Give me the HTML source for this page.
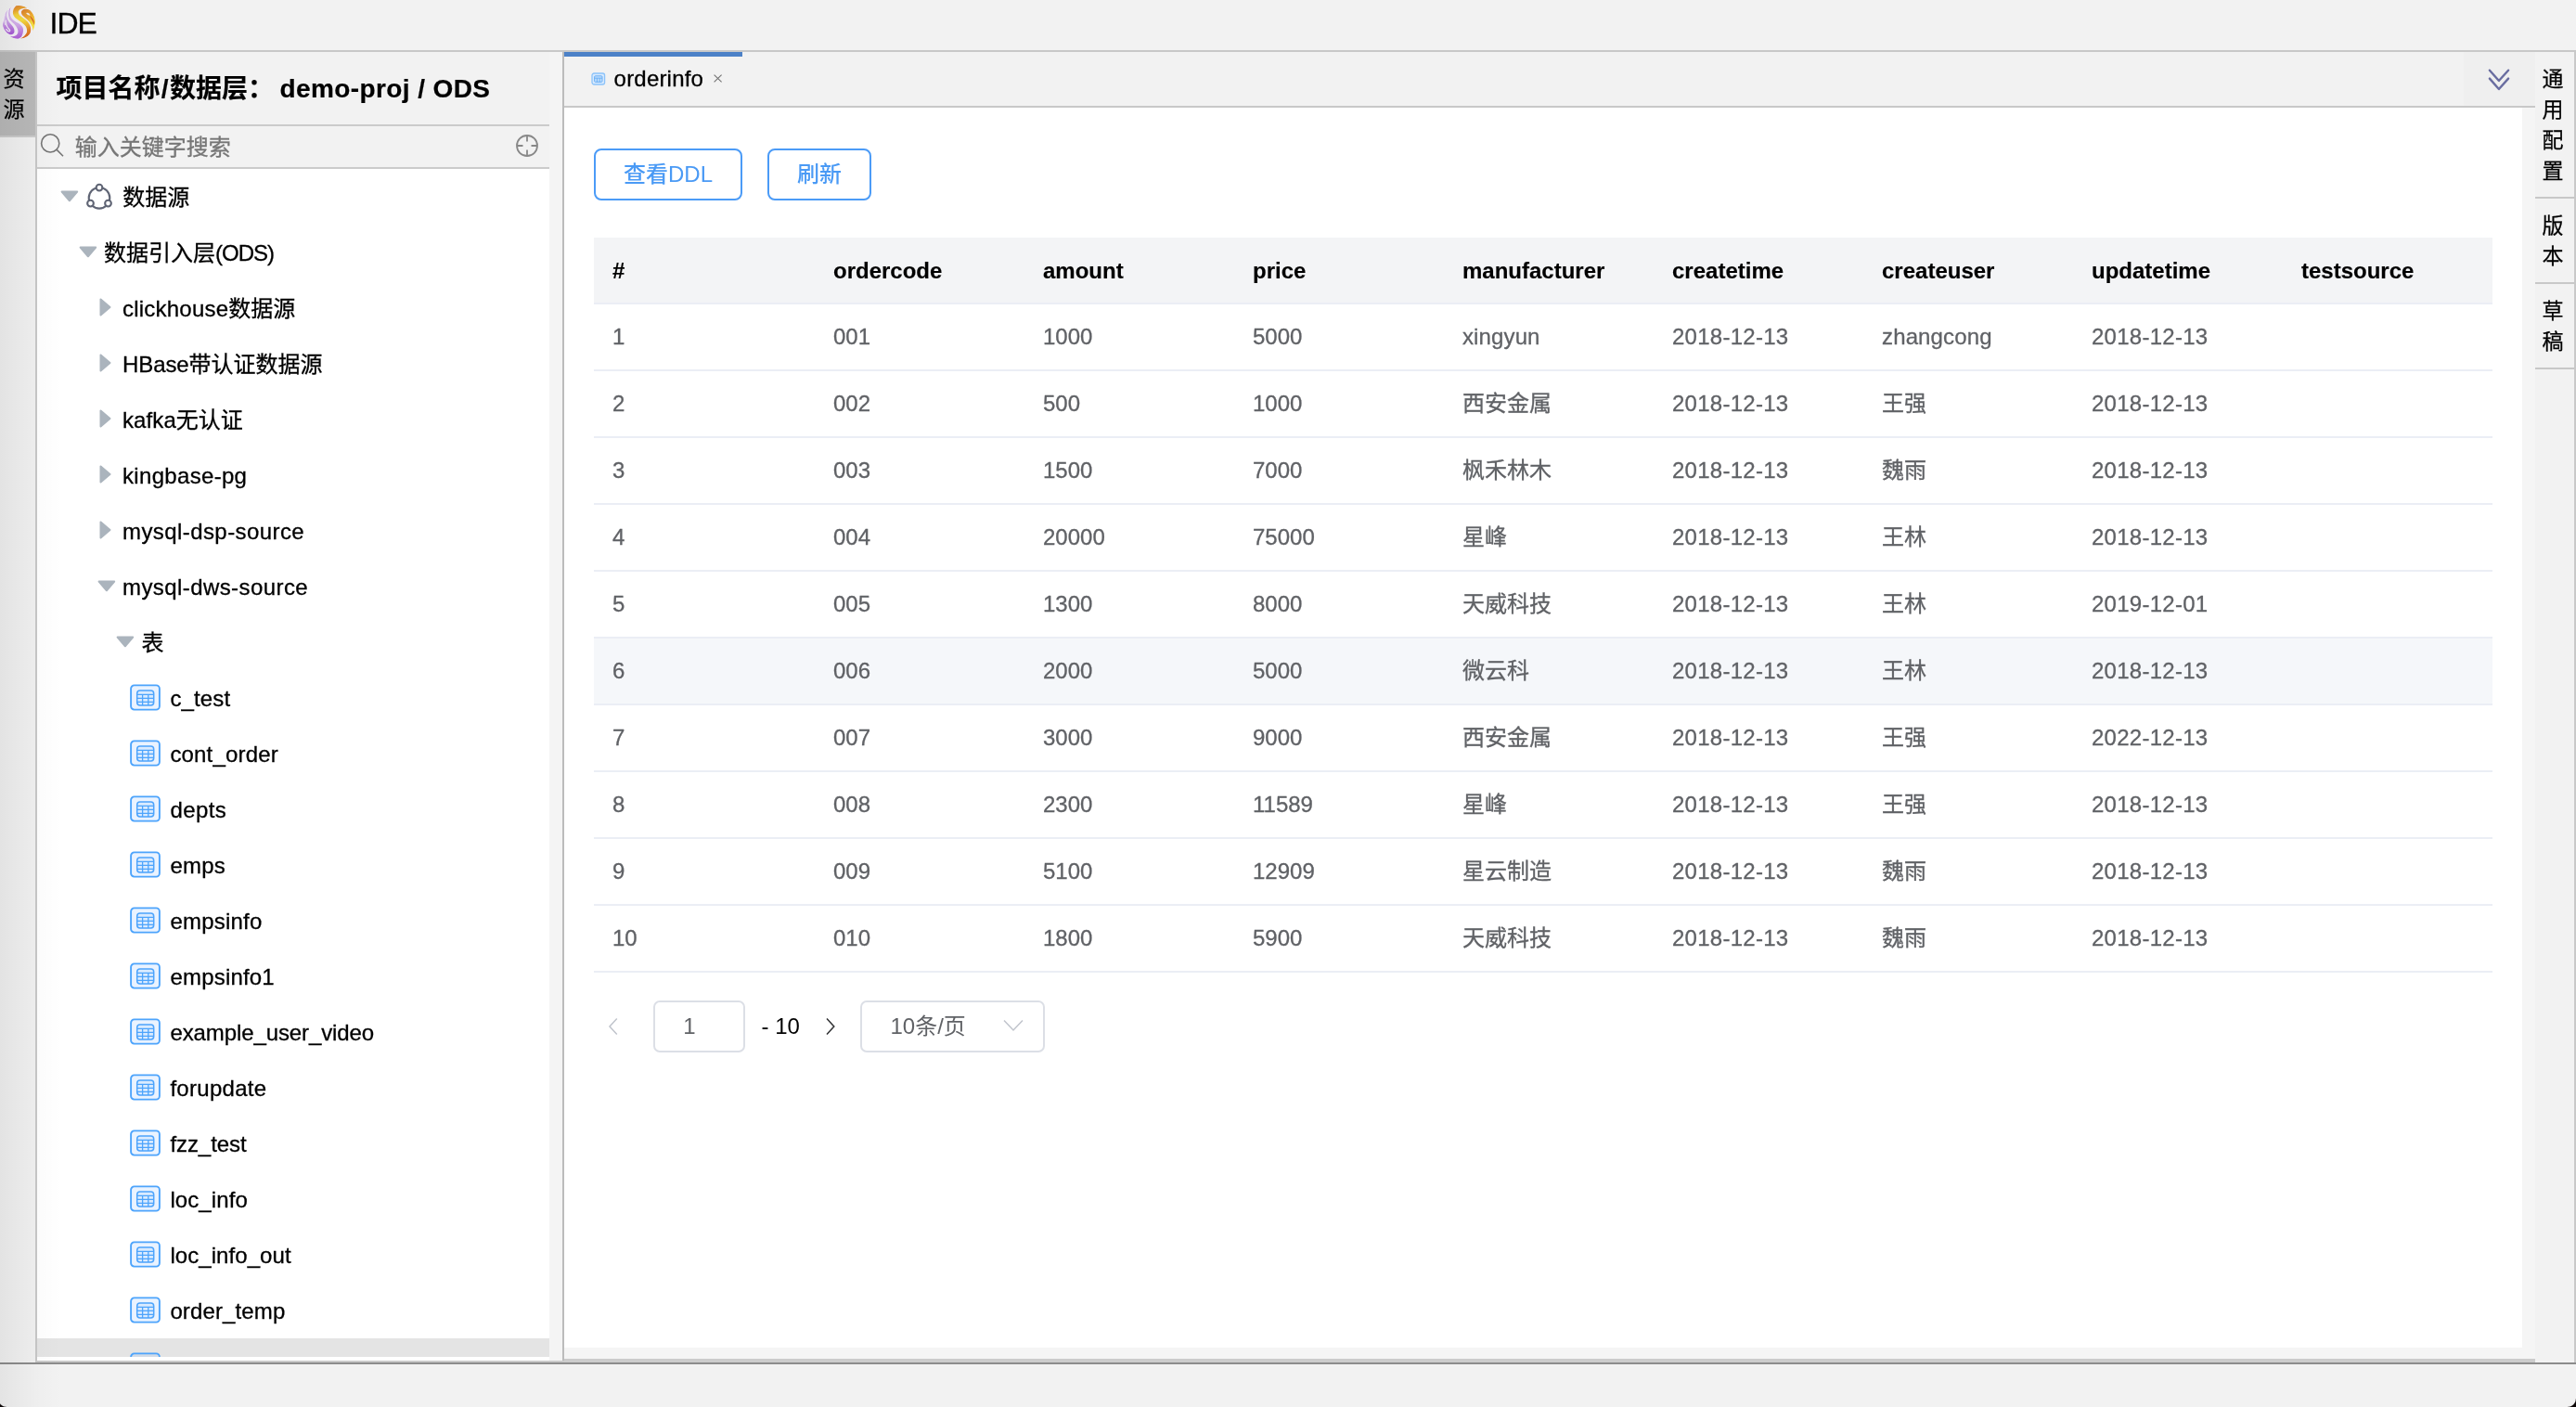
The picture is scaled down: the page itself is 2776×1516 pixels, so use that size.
<!DOCTYPE html>
<html lang="zh-CN">
<head>
<meta charset="utf-8">
<title>IDE</title>
<style>
*{box-sizing:border-box;margin:0;padding:0}
html,body{width:2776px;height:1516px;overflow:hidden;background:#f2f2f2}
body{position:relative;font-family:"Liberation Sans","Noto Sans CJK SC",sans-serif;font-size:24px;color:#000;-webkit-font-smoothing:antialiased}
.abs{position:absolute}
#root{position:absolute;left:0;top:0;width:2776px;height:1516px;will-change:transform}
/* header */
#hdr{position:absolute;left:0;top:0;width:2776px;height:54px;background:#f2f2f2}
#hdrline{position:absolute;left:0;top:54px;width:2776px;height:2px;background:#c8c8c8}
#logo{position:absolute;left:2px;top:6px}
#ide{-webkit-text-stroke:.3px #000;letter-spacing:-.95px;position:absolute;left:53.500px;top:6.5px;font-size:32px;line-height:37px;color:#000}
/* left strip */
#lstrip{position:absolute;left:0;top:56px;width:38px;height:1412px;background:#f1f1f1}
#lstripb{position:absolute;left:38px;top:56px;width:2px;height:1412px;background:#c7c7c7}
#restab{-webkit-text-stroke:.25px #000;position:absolute;left:0;top:56px;width:38px;height:90px;background:#b9b9b9;font-size:23px;line-height:33.500px;padding:12.600px 0 0 3.500px}
#restabb{position:absolute;left:0;top:146px;width:38px;height:2px;background:#cbcbcb}
/* left panel */
#lp{position:absolute;left:40px;top:56px;width:552px;height:1410px;background:#fff;overflow:hidden}
#lptitle{-webkit-text-stroke:.2px #000;position:absolute;left:0;top:0;width:552px;height:78px;background:#f2f2f2;font-weight:bold;font-size:28px;line-height:79.600px;padding-left:20.500px;white-space:pre}
#lptitle span{letter-spacing:.4px;margin-left:-1.200px}
#lptitle i{font-style:normal;margin:0 1.300px}
#lpl1{position:absolute;left:0;top:78px;width:552px;height:2px;background:#cbcbcb}
#lpsearch{position:absolute;left:0;top:80px;width:552px;height:44px;background:#f2f2f2}
#lpl2{position:absolute;left:0;top:124px;width:552px;height:2px;background:#cbcbcb}
#ph{-webkit-text-stroke:.3px #767676;position:absolute;left:40.800px;top:0;line-height:45.600px;font-size:24px;color:#767676}
#tree{position:absolute;left:0;top:126px;width:552px;height:1284px;overflow:hidden}
#tree .tr{position:absolute;left:0;width:552px;height:60px}
#tree .tr.sel{background:#e4e4e4}
#tree .tl{position:absolute;top:0;line-height:61px;font-size:24px;white-space:nowrap;color:#000;-webkit-text-stroke:.3px #000}
#tree .tl b,#tbl .td b{font-weight:normal}
#tree .tri{position:absolute}
#tree .ic{position:absolute;line-height:0}
#treeend{position:absolute;left:0;top:1406px;width:552px;height:4px;background:#fff}
#split{position:absolute;left:592px;top:56px;width:14px;height:1412px;background:#f4f4f4}
#splitb{position:absolute;left:606px;top:56px;width:2px;height:1412px;background:#bcbcbc}
/* main */
#tabbar{position:absolute;left:608px;top:56px;width:2124px;height:58px;background:#f2f2f2}
#tabline{position:absolute;left:608px;top:114px;width:2124px;height:2px;background:#c8c8c8}
#tabind{position:absolute;left:608px;top:56px;width:192px;height:5px;background:#4c81c7}
#tabtxt{-webkit-text-stroke:.3px #000;position:absolute;left:661.600px;top:56px;line-height:58.400px;font-size:24px;letter-spacing:.2px}
#content{position:absolute;left:608px;top:116px;width:2110px;height:1336px;background:#fff}
#vsb{position:absolute;left:2718px;top:116px;width:14px;height:1348px;background:#f5f5f5}
#hsb{position:absolute;left:608px;top:1452px;width:2124px;height:12px;background:#f5f5f5}
#hsb2{position:absolute;left:608px;top:1464px;width:2124px;height:4px;background:#cccccc}
#lbot{position:absolute;left:40px;top:1466px;width:568px;height:2px;background:#cacaca}
#botline{position:absolute;left:0;top:1468px;width:2776px;height:2px;background:#8c8c8c}
#bot{position:absolute;left:0;top:1470px;width:2776px;height:46px;background:#f2f2f2}
.btn{position:absolute;top:160px;height:56px;border:2px solid #4b9bf7;border-radius:8px;background:#fff;color:#4a9af5;font-size:24px;font-weight:500;line-height:52px;text-align:center;font-family:"Liberation Sans","Noto Sans CJK SC",sans-serif}
/* table */
#tbl{position:absolute;left:640px;top:256px;width:2046px;height:792px;font-size:24px}
#tbl .thead{position:absolute;left:0;top:0;width:2046px;height:72px;background:#f3f4f6;border-bottom:2px solid #ebeef5}
#tbl .th{position:absolute;top:0;line-height:71.8px;-webkit-text-stroke:.15px #000;font-weight:bold;color:#000;white-space:nowrap}
#tbl .row{position:absolute;left:0;width:2046px;height:72px;border-bottom:2px solid #ebeef5}
#tbl .row.hov{background:#f5f7fa}
#tbl .td{position:absolute;top:0;line-height:70.6px;-webkit-text-stroke:.3px #606266;color:#606266;white-space:nowrap}
/* pagination */
.pbox{position:absolute;top:1078px;height:55.500px;border:2px solid #dcdfe6;border-radius:7px;background:#fff}
/* right panel */
#rp{position:absolute;left:2732px;top:56px;width:42px;height:1412px;background:#f2f2f2}
#rpb{position:absolute;left:2774px;top:56px;width:2px;height:1412px;background:#c9c9c9}
.rt{-webkit-text-stroke:.25px #000;position:absolute;left:2730px;width:42px;font-size:23px;line-height:33px;text-align:center}
.rtl{position:absolute;left:2732px;width:42px;height:2px;background:#c8c8c8}
#shade{position:absolute;left:0;top:0;width:70px;height:1516px;background:linear-gradient(to right,rgba(0,0,0,.06),rgba(0,0,0,.017) 40px,rgba(0,0,0,0) 66px);pointer-events:none}
#cl{position:absolute;left:0;bottom:0;width:7px;height:9px;background:radial-gradient(circle at 7px 0,rgba(0,0,0,0) 8.300px,#0c0606 9.400px)}
#cr{position:absolute;right:0;bottom:0;width:9px;height:9px;background:radial-gradient(circle at 0 0,rgba(0,0,0,0) 8.300px,#0c0606 9.400px)}
</style>
</head>
<body>
<div id="root">
<div id="hdr"></div><div id="hdrline"></div>
<svg id="logo" width="36" height="36" viewBox="0 0 36 36">
<defs>
<linearGradient id="gp" gradientUnits="userSpaceOnUse" x1="12" y1="2" x2="18" y2="35"><stop offset="0" stop-color="#c595e4"/><stop offset="0.3" stop-color="#d9bbee"/><stop offset="0.58" stop-color="#d3abeb"/><stop offset="0.8" stop-color="#c084e2"/><stop offset="1" stop-color="#b05fd9"/></linearGradient>
<linearGradient id="gp2" gradientUnits="userSpaceOnUse" x1="4" y1="5" x2="10" y2="31"><stop offset="0" stop-color="#dcc6ef"/><stop offset="0.45" stop-color="#cfa8e9"/><stop offset="0.75" stop-color="#b978de"/><stop offset="1" stop-color="#a658d5"/></linearGradient>
<linearGradient id="go" gradientUnits="userSpaceOnUse" x1="14" y1="0" x2="25" y2="35"><stop offset="0" stop-color="#dc832f"/><stop offset="0.130" stop-color="#e9a030"/><stop offset="0.270" stop-color="#f5d23c"/><stop offset="0.460" stop-color="#f6e142"/><stop offset="0.63" stop-color="#f1ba34"/><stop offset="0.8" stop-color="#e58a28"/><stop offset="1" stop-color="#d8631f"/></linearGradient>
<linearGradient id="go2" gradientUnits="userSpaceOnUse" x1="23" y1="4" x2="35" y2="25"><stop offset="0" stop-color="#dc832f"/><stop offset="0.4" stop-color="#eeab31"/><stop offset="0.72" stop-color="#f6dc3f"/><stop offset="1" stop-color="#f8e945"/></linearGradient>
<clipPath id="cc"><circle cx="18" cy="18" r="18"/></clipPath>
</defs>
<g clip-path="url(#cc)">
<circle cx="18" cy="18" r="18" fill="#f6f1f9"/>
<path d="M6.800 4.600C5.400 7 4.900 9.500 5.300 12C5.700 14.800 7.400 17.600 10.500 21C12.600 23.300 14 26 13.400 28.800C12.800 31 10.500 31.800 8.200 31C5.200 29.800 2.600 26.500 1.200 22.300C0.900 20.500 1.200 18.300 2 16.500C2.600 14.500 3 11 3.600 9C4.400 7 5.400 5.600 6.800 4.600Z" fill="url(#gp2)"/>
<path d="M4.200 15.500C4 19 5 22.400 7.400 25C8.600 26.300 9.200 27 8.400 27.600C7.400 28.200 5.600 27 4.400 25.200" stroke="#f4ecf9" stroke-width="1.300" fill="none"/>
<path d="M3.400 9.500C2.500 13.500 2.600 17.500 3.700 21" stroke="#f1e7f7" stroke-width="0.900" fill="none"/>
<path d="M9.600 1.600C8.600 4.500 8.200 7.400 8.900 10.100C9.400 12 10.200 13.500 11.400 14.800C12.900 16.400 14.800 17.500 16.800 18.500C18.800 19.600 20.600 20.900 21.800 22.600C22.800 24 23.200 25.600 23 27.300C22.800 29.700 22.200 31.800 21.100 33.500C20 34.800 18.500 35.500 16.800 35.700C14 35.600 11.300 34.700 8.900 33.200C11.500 33.500 13.800 33.100 15.500 32C17 30.900 17.600 29.200 17.400 27.300C17.100 25 15.900 22.900 14.300 21C12.600 19 10.300 17.400 8.600 15.600C7.200 13.500 6.800 9 7.600 5.500C8 3.800 8.700 2.500 9.600 1.600Z" fill="url(#gp)"/>
<path d="M15.500 0.100C19 -0.600 24 0.500 27.100 2.400C24 2.600 21.500 3 19.900 4.100C18 5.400 17.400 6.800 18 7.900C18.400 9.400 19 10.200 19.900 11C21.500 12.400 23.300 13.500 24.900 14.800C26.800 16.300 28.300 17.800 29.300 19.500C30.300 21 30.900 22.500 31.100 24.100C31.300 25.800 31.200 27.400 30.800 28.800C30.200 30.400 29.200 31.800 27.700 32.900C25.500 34.400 22.800 35.200 19.900 35.400C22 34.600 23.700 33.500 24.900 32C26.300 30.500 27.100 29 27.100 27.300C27.100 25.300 26.600 23.600 25.500 22C24.400 20.400 22.800 19.100 21.100 17.900C19.200 16.600 17.200 15.400 15.500 14.100C14.200 13 13 11.700 12.400 10.100C11.800 8.500 11.800 6.900 12.200 5.400C12.700 3.400 13.900 1.500 15.500 0.100Z" fill="url(#go)"/>
<path d="M21.100 6.300C22 4.800 23.200 4.100 24.600 3.800C26.200 3.500 27.800 3.700 29.300 4.400C31 5.300 32.300 6.700 33.300 8.500C34.500 10.400 35.300 12.500 35.800 14.800C36.200 16.900 36.100 19 35.500 21C35 23.400 34.300 25.600 33.300 27.600C33.300 25.200 32.800 23 31.800 21C30.800 18.900 29.400 17 27.700 15.400C26.200 14 24.300 12.600 22.700 11C21.400 9.700 20.700 8 21.100 6.300Z" fill="url(#go2)"/>
<path d="M26.200 8.300C27.600 7.200 29.800 8.200 30.500 10.800C28.800 10.600 27.200 9.900 26.200 8.300Z" fill="#f8f1ec"/>
<path d="M29.900 11C32 12 33.800 14 34.600 16.300C35 18 34.900 19.500 34.600 21C34 18.500 33 16.300 31.600 14.300C31 13.200 30.400 12 29.900 11Z" fill="#dc6a26"/>
</g>
</svg>
<div id="ide">IDE</div>

<div id="lstrip"></div><div id="lstripb"></div>
<div id="restab">资<br>源</div><div id="restabb"></div>

<div id="lp">
<div id="lptitle">项目名称<i>/</i>数据层： <span>demo-proj / ODS</span></div><div id="lpl1"></div>
<div id="lpsearch">
<svg class="abs" style="left:2px;top:6px" width="30" height="30" viewBox="0 0 30 30"><circle cx="12.2" cy="12.4" r="9.6" fill="none" stroke="#757575" stroke-width="1.6"/><path d="M19.200 19.400L26 26.200" stroke="#757575" stroke-width="1.6" fill="none"/></svg>
<div id="ph">输入关键字搜索</div>
<svg class="abs" style="left:514px;top:7.400px" width="28" height="28" viewBox="0 0 28 28"><g fill="none" stroke="#888" stroke-width="1.8"><circle cx="14" cy="14" r="11"/><path d="M14 3V9.500M14 18.500V25M3 14H9.500M18.500 14H25"/></g></svg>
</div><div id="lpl2"></div>
<div id="tree">
<div class="tr" style="top:0px"><svg class="tri" style="left:24.5px;top:22.5px" width="20" height="13" viewBox="0 0 20 13"><path d="M1.600 1.500H18.200L9.900 11.300Z" fill="#abb4bd" stroke="#abb4bd" stroke-width="2" stroke-linejoin="round"/></svg><span class="ic" style="left:51.7px;top:15px"><svg class="dsi" width="30" height="30" viewBox="0 0 30 30"><g fill="#fff" stroke="#5f6474" stroke-width="2.1"><circle cx="15" cy="16.3" r="11.3" fill="none"/><circle cx="15" cy="5.1" r="3.35"/><circle cx="5.5" cy="22.1" r="3.35"/><circle cx="24.5" cy="22.1" r="3.35"/></g></svg></span><span class="tl" style="left:92.2px">数据源</span></div>
<div class="tr" style="top:60px"><svg class="tri" style="left:44.5px;top:22.5px" width="20" height="13" viewBox="0 0 20 13"><path d="M1.600 1.500H18.200L9.900 11.300Z" fill="#abb4bd" stroke="#abb4bd" stroke-width="2" stroke-linejoin="round"/></svg><span class="tl" style="left:72.0px">数据引入层<b style="letter-spacing:-0.97px">(ODS)</b></span></div>
<div class="tr" style="top:120px"><svg class="tri" style="left:67.35px;top:19.45px" width="13" height="20" viewBox="0 0 13 20"><path d="M1.5 1.5V18.5L11.5 10Z" fill="#abb4bd" stroke="#abb4bd" stroke-width="2" stroke-linejoin="round"/></svg><span class="tl" style="left:92.0px"><b style="letter-spacing:0.22px">clickhouse</b>数据源</span></div>
<div class="tr" style="top:180px"><svg class="tri" style="left:67.35px;top:19.45px" width="13" height="20" viewBox="0 0 13 20"><path d="M1.5 1.5V18.5L11.5 10Z" fill="#abb4bd" stroke="#abb4bd" stroke-width="2" stroke-linejoin="round"/></svg><span class="tl" style="left:92.0px"><b style="letter-spacing:-0.1px">HBase</b>带认证数据源</span></div>
<div class="tr" style="top:240px"><svg class="tri" style="left:67.35px;top:19.45px" width="13" height="20" viewBox="0 0 13 20"><path d="M1.5 1.5V18.5L11.5 10Z" fill="#abb4bd" stroke="#abb4bd" stroke-width="2" stroke-linejoin="round"/></svg><span class="tl" style="left:92.0px"><b style="letter-spacing:0.09px">kafka</b>无认证</span></div>
<div class="tr" style="top:300px"><svg class="tri" style="left:67.35px;top:19.45px" width="13" height="20" viewBox="0 0 13 20"><path d="M1.5 1.5V18.5L11.5 10Z" fill="#abb4bd" stroke="#abb4bd" stroke-width="2" stroke-linejoin="round"/></svg><span class="tl" style="left:92.0px"><b style="letter-spacing:0.32px">kingbase-pg</b></span></div>
<div class="tr" style="top:360px"><svg class="tri" style="left:67.35px;top:19.45px" width="13" height="20" viewBox="0 0 13 20"><path d="M1.5 1.5V18.5L11.5 10Z" fill="#abb4bd" stroke="#abb4bd" stroke-width="2" stroke-linejoin="round"/></svg><span class="tl" style="left:92.0px"><b style="letter-spacing:0.42px">mysql-dsp-source</b></span></div>
<div class="tr" style="top:420px"><svg class="tri" style="left:64.5px;top:22.5px" width="20" height="13" viewBox="0 0 20 13"><path d="M1.600 1.500H18.200L9.900 11.300Z" fill="#abb4bd" stroke="#abb4bd" stroke-width="2" stroke-linejoin="round"/></svg><span class="tl" style="left:92.0px"><b style="letter-spacing:0.42px">mysql-dws-source</b></span></div>
<div class="tr" style="top:480px"><svg class="tri" style="left:84.9px;top:22.5px" width="20" height="13" viewBox="0 0 20 13"><path d="M1.600 1.500H18.200L9.900 11.300Z" fill="#abb4bd" stroke="#abb4bd" stroke-width="2" stroke-linejoin="round"/></svg><span class="tl" style="left:112.4px">表</span></div>
<div class="tr" style="top:540px"><span class="ic" style="left:100px;top:15px"><svg class="ti" width="33" height="29" viewBox="0 0 33 29"><rect x="1.1" y="1.4" width="30.8" height="26.2" rx="3.600" fill="rgba(64,150,255,.110)" stroke="#4da4fc" stroke-width="1.9"/><rect x="7.7" y="7" width="18" height="16" rx="3.200" fill="rgba(64,150,255,.090)" stroke="#4da4fc" stroke-width="1.5"/><path d="M7.7 11.4H25.7M7.700 15.4H25.700M7.700 19.300H25.700M13.600 11.400V23M19.800 11.400V23" stroke="#4da4fc" stroke-width="1.3" fill="none"/></svg></span><span class="tl" style="left:143.400px"><b style="letter-spacing:0.14px">c_test</b></span></div>
<div class="tr" style="top:600px"><span class="ic" style="left:100px;top:15px"><svg class="ti" width="33" height="29" viewBox="0 0 33 29"><rect x="1.1" y="1.4" width="30.8" height="26.2" rx="3.600" fill="rgba(64,150,255,.110)" stroke="#4da4fc" stroke-width="1.9"/><rect x="7.7" y="7" width="18" height="16" rx="3.200" fill="rgba(64,150,255,.090)" stroke="#4da4fc" stroke-width="1.5"/><path d="M7.7 11.4H25.7M7.700 15.4H25.700M7.700 19.300H25.700M13.600 11.400V23M19.800 11.400V23" stroke="#4da4fc" stroke-width="1.3" fill="none"/></svg></span><span class="tl" style="left:143.400px"><b style="letter-spacing:0.17px">cont_order</b></span></div>
<div class="tr" style="top:660px"><span class="ic" style="left:100px;top:15px"><svg class="ti" width="33" height="29" viewBox="0 0 33 29"><rect x="1.1" y="1.4" width="30.8" height="26.2" rx="3.600" fill="rgba(64,150,255,.110)" stroke="#4da4fc" stroke-width="1.9"/><rect x="7.7" y="7" width="18" height="16" rx="3.200" fill="rgba(64,150,255,.090)" stroke="#4da4fc" stroke-width="1.5"/><path d="M7.7 11.4H25.7M7.700 15.4H25.700M7.700 19.300H25.700M13.600 11.400V23M19.800 11.400V23" stroke="#4da4fc" stroke-width="1.3" fill="none"/></svg></span><span class="tl" style="left:143.400px"><b style="letter-spacing:0.44px">depts</b></span></div>
<div class="tr" style="top:720px"><span class="ic" style="left:100px;top:15px"><svg class="ti" width="33" height="29" viewBox="0 0 33 29"><rect x="1.1" y="1.4" width="30.8" height="26.2" rx="3.600" fill="rgba(64,150,255,.110)" stroke="#4da4fc" stroke-width="1.9"/><rect x="7.7" y="7" width="18" height="16" rx="3.200" fill="rgba(64,150,255,.090)" stroke="#4da4fc" stroke-width="1.5"/><path d="M7.7 11.4H25.7M7.700 15.4H25.700M7.700 19.300H25.700M13.600 11.400V23M19.800 11.400V23" stroke="#4da4fc" stroke-width="1.3" fill="none"/></svg></span><span class="tl" style="left:143.400px"><b style="letter-spacing:0.23px">emps</b></span></div>
<div class="tr" style="top:780px"><span class="ic" style="left:100px;top:15px"><svg class="ti" width="33" height="29" viewBox="0 0 33 29"><rect x="1.1" y="1.4" width="30.8" height="26.2" rx="3.600" fill="rgba(64,150,255,.110)" stroke="#4da4fc" stroke-width="1.9"/><rect x="7.7" y="7" width="18" height="16" rx="3.200" fill="rgba(64,150,255,.090)" stroke="#4da4fc" stroke-width="1.5"/><path d="M7.7 11.4H25.7M7.700 15.4H25.700M7.700 19.300H25.700M13.600 11.400V23M19.800 11.400V23" stroke="#4da4fc" stroke-width="1.3" fill="none"/></svg></span><span class="tl" style="left:143.400px"><b style="letter-spacing:0.22px">empsinfo</b></span></div>
<div class="tr" style="top:840px"><span class="ic" style="left:100px;top:15px"><svg class="ti" width="33" height="29" viewBox="0 0 33 29"><rect x="1.1" y="1.4" width="30.8" height="26.2" rx="3.600" fill="rgba(64,150,255,.110)" stroke="#4da4fc" stroke-width="1.9"/><rect x="7.7" y="7" width="18" height="16" rx="3.200" fill="rgba(64,150,255,.090)" stroke="#4da4fc" stroke-width="1.5"/><path d="M7.7 11.4H25.7M7.700 15.4H25.700M7.700 19.300H25.700M13.600 11.400V23M19.800 11.400V23" stroke="#4da4fc" stroke-width="1.3" fill="none"/></svg></span><span class="tl" style="left:143.400px"><b style="letter-spacing:0.2px">empsinfo1</b></span></div>
<div class="tr" style="top:900px"><span class="ic" style="left:100px;top:15px"><svg class="ti" width="33" height="29" viewBox="0 0 33 29"><rect x="1.1" y="1.4" width="30.8" height="26.2" rx="3.600" fill="rgba(64,150,255,.110)" stroke="#4da4fc" stroke-width="1.9"/><rect x="7.7" y="7" width="18" height="16" rx="3.200" fill="rgba(64,150,255,.090)" stroke="#4da4fc" stroke-width="1.5"/><path d="M7.7 11.4H25.7M7.700 15.4H25.700M7.700 19.300H25.700M13.600 11.400V23M19.800 11.400V23" stroke="#4da4fc" stroke-width="1.3" fill="none"/></svg></span><span class="tl" style="left:143.400px"><b style="letter-spacing:-0.1px">example_user_video</b></span></div>
<div class="tr" style="top:960px"><span class="ic" style="left:100px;top:15px"><svg class="ti" width="33" height="29" viewBox="0 0 33 29"><rect x="1.1" y="1.4" width="30.8" height="26.2" rx="3.600" fill="rgba(64,150,255,.110)" stroke="#4da4fc" stroke-width="1.9"/><rect x="7.7" y="7" width="18" height="16" rx="3.200" fill="rgba(64,150,255,.090)" stroke="#4da4fc" stroke-width="1.5"/><path d="M7.7 11.4H25.7M7.700 15.4H25.700M7.700 19.300H25.700M13.600 11.400V23M19.800 11.400V23" stroke="#4da4fc" stroke-width="1.3" fill="none"/></svg></span><span class="tl" style="left:143.400px"><b style="letter-spacing:0.29px">forupdate</b></span></div>
<div class="tr" style="top:1020px"><span class="ic" style="left:100px;top:15px"><svg class="ti" width="33" height="29" viewBox="0 0 33 29"><rect x="1.1" y="1.4" width="30.8" height="26.2" rx="3.600" fill="rgba(64,150,255,.110)" stroke="#4da4fc" stroke-width="1.9"/><rect x="7.7" y="7" width="18" height="16" rx="3.200" fill="rgba(64,150,255,.090)" stroke="#4da4fc" stroke-width="1.5"/><path d="M7.7 11.4H25.7M7.700 15.4H25.700M7.700 19.300H25.700M13.600 11.400V23M19.800 11.400V23" stroke="#4da4fc" stroke-width="1.3" fill="none"/></svg></span><span class="tl" style="left:143.400px"><b style="letter-spacing:-0.07px">fzz_test</b></span></div>
<div class="tr" style="top:1080px"><span class="ic" style="left:100px;top:15px"><svg class="ti" width="33" height="29" viewBox="0 0 33 29"><rect x="1.1" y="1.4" width="30.8" height="26.2" rx="3.600" fill="rgba(64,150,255,.110)" stroke="#4da4fc" stroke-width="1.9"/><rect x="7.7" y="7" width="18" height="16" rx="3.200" fill="rgba(64,150,255,.090)" stroke="#4da4fc" stroke-width="1.5"/><path d="M7.7 11.4H25.7M7.700 15.4H25.700M7.700 19.300H25.700M13.600 11.400V23M19.800 11.400V23" stroke="#4da4fc" stroke-width="1.3" fill="none"/></svg></span><span class="tl" style="left:143.400px"><b style="letter-spacing:0.1px">loc_info</b></span></div>
<div class="tr" style="top:1140px"><span class="ic" style="left:100px;top:15px"><svg class="ti" width="33" height="29" viewBox="0 0 33 29"><rect x="1.1" y="1.4" width="30.8" height="26.2" rx="3.600" fill="rgba(64,150,255,.110)" stroke="#4da4fc" stroke-width="1.9"/><rect x="7.7" y="7" width="18" height="16" rx="3.200" fill="rgba(64,150,255,.090)" stroke="#4da4fc" stroke-width="1.5"/><path d="M7.7 11.4H25.7M7.700 15.4H25.700M7.700 19.300H25.700M13.600 11.400V23M19.800 11.400V23" stroke="#4da4fc" stroke-width="1.3" fill="none"/></svg></span><span class="tl" style="left:143.400px"><b style="letter-spacing:0.07px">loc_info_out</b></span></div>
<div class="tr" style="top:1200px"><span class="ic" style="left:100px;top:15px"><svg class="ti" width="33" height="29" viewBox="0 0 33 29"><rect x="1.1" y="1.4" width="30.8" height="26.2" rx="3.600" fill="rgba(64,150,255,.110)" stroke="#4da4fc" stroke-width="1.9"/><rect x="7.7" y="7" width="18" height="16" rx="3.200" fill="rgba(64,150,255,.090)" stroke="#4da4fc" stroke-width="1.5"/><path d="M7.7 11.4H25.7M7.700 15.4H25.700M7.700 19.300H25.700M13.600 11.400V23M19.800 11.400V23" stroke="#4da4fc" stroke-width="1.3" fill="none"/></svg></span><span class="tl" style="left:143.400px"><b style="letter-spacing:0.13px">order_temp</b></span></div>
<div class="tr sel" style="top:1260px"><span class="ic" style="left:100px;top:15px"><svg class="ti" width="33" height="29" viewBox="0 0 33 29"><rect x="1.1" y="1.4" width="30.8" height="26.2" rx="3.600" fill="rgba(64,150,255,.110)" stroke="#4da4fc" stroke-width="1.9"/><rect x="7.7" y="7" width="18" height="16" rx="3.200" fill="rgba(64,150,255,.090)" stroke="#4da4fc" stroke-width="1.5"/><path d="M7.7 11.4H25.7M7.700 15.4H25.700M7.700 19.300H25.700M13.600 11.400V23M19.800 11.400V23" stroke="#4da4fc" stroke-width="1.3" fill="none"/></svg></span><span class="tl" style="left:143.400px"><b style="letter-spacing:0.19px">orderinfo</b></span></div>
</div>
<div id="treeend"></div>
</div>
<div id="split"></div><div id="splitb"></div>

<div id="tabbar"></div><div id="tabline"></div><div id="tabind"></div>
<svg class="abs" style="left:637px;top:77.500px" width="16" height="14" viewBox="0 0 16 14"><rect x="1" y="1" width="13.600" height="12" rx="2.200" fill="#d9eafd" stroke="#8cc3fa" stroke-width="1.300"/><rect x="3.600" y="3.800" width="8.400" height="6.600" rx="1" fill="#bcdcfc" stroke="#62abf5" stroke-width="0.900"/><path d="M3.600 6.200H12M6.400 6.200V10.400M9.200 6.200V10.400" stroke="#62abf5" stroke-width="0.800" fill="none"/></svg>
<div id="tabtxt">orderinfo</div>
<svg class="abs" style="left:769.400px;top:79.800px" width="10" height="10" viewBox="0 0 10 10"><path d="M0.600 0.600L8.600 8.400M8.600 0.600L0.600 8.400" stroke="#707070" stroke-width="1.050" fill="none"/></svg>
<div class="abs" style="left:2655px;top:56px;width:77px;height:58px;background:#efefef"></div>
<svg class="abs" style="left:2680px;top:73px" width="28" height="26" viewBox="0 0 28 26"><path d="M2.900 2.700L12.900 14L23.100 2.700M2.900 11.600L12.900 23L23.100 11.600" stroke="#696da0" stroke-width="2.400" stroke-linecap="round" stroke-linejoin="round" fill="none"/></svg>

<div id="content"></div><div id="vsb"></div><div id="hsb"></div><div id="hsb2"></div>
<div class="btn" style="left:640px;width:160px">查看DDL</div>
<div class="btn" style="left:827px;width:112px">刷新</div>

<div id="tbl">
<div class="thead"><div class="th" style="left:20px">#</div><div class="th" style="left:258px">ordercode</div><div class="th" style="left:484px">amount</div><div class="th" style="left:710px">price</div><div class="th" style="left:936px">manufacturer</div><div class="th" style="left:1162px">createtime</div><div class="th" style="left:1388px">createuser</div><div class="th" style="left:1614px">updatetime</div><div class="th" style="left:1840px">testsource</div></div>
<div class="row" style="top:72px"><div class="td" style="left:20px"><b>1</b></div><div class="td" style="left:258px"><b>001</b></div><div class="td" style="left:484px"><b>1000</b></div><div class="td" style="left:710px"><b>5000</b></div><div class="td" style="left:936px"><b style="letter-spacing:0.12px">xingyun</b></div><div class="td" style="left:1162px"><b style="letter-spacing:0.27px">2018-12-13</b></div><div class="td" style="left:1388px"><b style="letter-spacing:0.14px">zhangcong</b></div><div class="td" style="left:1614px"><b style="letter-spacing:0.27px">2018-12-13</b></div></div>
<div class="row" style="top:144px"><div class="td" style="left:20px"><b>2</b></div><div class="td" style="left:258px"><b>002</b></div><div class="td" style="left:484px"><b>500</b></div><div class="td" style="left:710px"><b>1000</b></div><div class="td" style="left:936px">西安金属</div><div class="td" style="left:1162px"><b style="letter-spacing:0.27px">2018-12-13</b></div><div class="td" style="left:1388px">王强</div><div class="td" style="left:1614px"><b style="letter-spacing:0.27px">2018-12-13</b></div></div>
<div class="row" style="top:216px"><div class="td" style="left:20px"><b>3</b></div><div class="td" style="left:258px"><b>003</b></div><div class="td" style="left:484px"><b>1500</b></div><div class="td" style="left:710px"><b>7000</b></div><div class="td" style="left:936px">枫禾林木</div><div class="td" style="left:1162px"><b style="letter-spacing:0.27px">2018-12-13</b></div><div class="td" style="left:1388px">魏雨</div><div class="td" style="left:1614px"><b style="letter-spacing:0.27px">2018-12-13</b></div></div>
<div class="row" style="top:288px"><div class="td" style="left:20px"><b>4</b></div><div class="td" style="left:258px"><b>004</b></div><div class="td" style="left:484px"><b>20000</b></div><div class="td" style="left:710px"><b>75000</b></div><div class="td" style="left:936px">星峰</div><div class="td" style="left:1162px"><b style="letter-spacing:0.27px">2018-12-13</b></div><div class="td" style="left:1388px">王林</div><div class="td" style="left:1614px"><b style="letter-spacing:0.27px">2018-12-13</b></div></div>
<div class="row" style="top:360px"><div class="td" style="left:20px"><b>5</b></div><div class="td" style="left:258px"><b>005</b></div><div class="td" style="left:484px"><b>1300</b></div><div class="td" style="left:710px"><b>8000</b></div><div class="td" style="left:936px">天威科技</div><div class="td" style="left:1162px"><b style="letter-spacing:0.27px">2018-12-13</b></div><div class="td" style="left:1388px">王林</div><div class="td" style="left:1614px"><b style="letter-spacing:0.27px">2019-12-01</b></div></div>
<div class="row hov" style="top:432px"><div class="td" style="left:20px"><b>6</b></div><div class="td" style="left:258px"><b>006</b></div><div class="td" style="left:484px"><b>2000</b></div><div class="td" style="left:710px"><b>5000</b></div><div class="td" style="left:936px">微云科</div><div class="td" style="left:1162px"><b style="letter-spacing:0.27px">2018-12-13</b></div><div class="td" style="left:1388px">王林</div><div class="td" style="left:1614px"><b style="letter-spacing:0.27px">2018-12-13</b></div></div>
<div class="row" style="top:504px"><div class="td" style="left:20px"><b>7</b></div><div class="td" style="left:258px"><b>007</b></div><div class="td" style="left:484px"><b>3000</b></div><div class="td" style="left:710px"><b>9000</b></div><div class="td" style="left:936px">西安金属</div><div class="td" style="left:1162px"><b style="letter-spacing:0.27px">2018-12-13</b></div><div class="td" style="left:1388px">王强</div><div class="td" style="left:1614px"><b style="letter-spacing:0.27px">2022-12-13</b></div></div>
<div class="row" style="top:576px"><div class="td" style="left:20px"><b>8</b></div><div class="td" style="left:258px"><b>008</b></div><div class="td" style="left:484px"><b>2300</b></div><div class="td" style="left:710px"><b>11589</b></div><div class="td" style="left:936px">星峰</div><div class="td" style="left:1162px"><b style="letter-spacing:0.27px">2018-12-13</b></div><div class="td" style="left:1388px">王强</div><div class="td" style="left:1614px"><b style="letter-spacing:0.27px">2018-12-13</b></div></div>
<div class="row" style="top:648px"><div class="td" style="left:20px"><b>9</b></div><div class="td" style="left:258px"><b>009</b></div><div class="td" style="left:484px"><b>5100</b></div><div class="td" style="left:710px"><b>12909</b></div><div class="td" style="left:936px">星云制造</div><div class="td" style="left:1162px"><b style="letter-spacing:0.27px">2018-12-13</b></div><div class="td" style="left:1388px">魏雨</div><div class="td" style="left:1614px"><b style="letter-spacing:0.27px">2018-12-13</b></div></div>
<div class="row" style="top:720px"><div class="td" style="left:20px"><b>10</b></div><div class="td" style="left:258px"><b>010</b></div><div class="td" style="left:484px"><b>1800</b></div><div class="td" style="left:710px"><b>5900</b></div><div class="td" style="left:936px">天威科技</div><div class="td" style="left:1162px"><b style="letter-spacing:0.27px">2018-12-13</b></div><div class="td" style="left:1388px">魏雨</div><div class="td" style="left:1614px"><b style="letter-spacing:0.27px">2018-12-13</b></div></div>
</div>

<svg class="abs" style="left:654px;top:1094px" width="14" height="24" viewBox="0 0 14 24"><path d="M10.800 3.600L3 12L10.800 20.400" stroke="#c0c4cc" stroke-width="1.500" fill="none"/></svg>
<div class="pbox" style="left:704px;width:99px"></div>
<div class="abs" style="left:705px;top:1079px;width:76px;text-align:center;line-height:53.600px;font-size:24px;color:#606266">1</div>
<div class="abs" style="left:820.500px;top:1079px;line-height:53.600px;font-size:24px;color:#000;white-space:pre">- 10</div>
<svg class="abs" style="left:888px;top:1094px" width="14" height="24" viewBox="0 0 14 24"><path d="M3 3.600L10.800 12L3 20.400" stroke="#303133" stroke-width="1.500" fill="none"/></svg>
<div class="pbox" style="left:927px;width:199px"></div>
<div class="abs" style="left:959.500px;top:1079px;line-height:53.600px;font-size:24px;color:#606266;white-space:nowrap">10条/页</div>
<svg class="abs" style="left:1080px;top:1097px" width="24" height="16" viewBox="0 0 24 16"><path d="M2 2.500L12 13L22 2.500" stroke="#c0c4cc" stroke-width="1.500" fill="none"/></svg>

<div id="rp"></div><div id="rpb"></div>
<div class="rt" style="top:68.700px">通<br>用<br>配<br>置</div><div class="rtl" style="top:212px"></div>
<div class="rt" style="top:226.600px">版<br>本</div><div class="rtl" style="top:304px"></div>
<div class="rt" style="top:318.600px">草<br>稿</div><div class="rtl" style="top:396px"></div>

<div id="lbot"></div><div id="botline"></div><div id="bot"></div>
<div id="shade"></div>
<div id="cl"></div><div id="cr"></div>
</div>
</body>
</html>
